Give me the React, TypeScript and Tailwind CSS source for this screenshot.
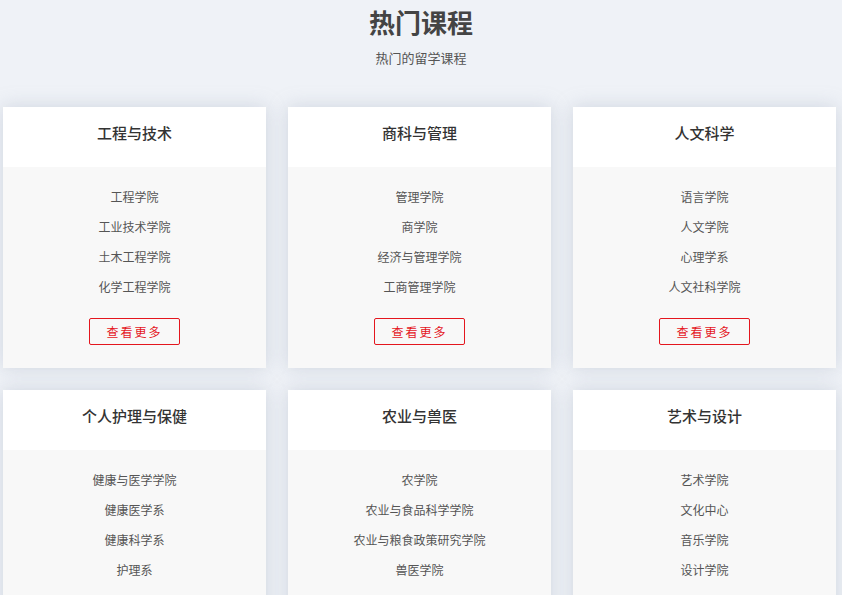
const categories = [
  { name: "工程与技术", items: ["工程学院", "工业技术学院", "土木工程学院", "化学工程学院"] },
  { name: "商科与管理", items: ["管理学院", "商学院", "经济与管理学院", "工商管理学院"] },
  { name: "人文科学", items: ["语言学院", "人文学院", "心理学系", "人文社科学院"] },
  { name: "个人护理与保健", items: ["健康与医学学院", "健康医学系", "健康科学系", "护理系"] },
  { name: "农业与兽医", items: ["农学院", "农业与食品科学学院", "农业与粮食政策研究学院", "兽医学院"] },
  { name: "艺术与设计", items: ["艺术学院", "文化中心", "音乐学院", "设计学院"] },
];

function CourseCard({ name, items }: { name: string; items: string[] }) {
  return (
    <div className="shadow-[0_0_18px_rgba(150,160,180,0.35)]">
      <div className="h-[60px] bg-white pt-[16px] text-center text-[15px] leading-[20px] font-medium text-[#333]">
        {name}
      </div>
      <div className="bg-[#f8f8f8] pt-[15px] pb-[23px] flex flex-col items-center">
        <ul className="text-[12px] text-[#555] text-center">
          {items.map((it) => (
            <li key={it} className="h-[30px] leading-[30px]">
              {it}
            </li>
          ))}
        </ul>
        <button className="mt-[16px] w-[91px] h-[27px] border border-[#e4161e] rounded-[2px] text-[12px] text-[#e4161e] tracking-[2px] bg-transparent">
          查看更多
        </button>
      </div>
    </div>
  );
}

export default function App() {
  return (
    <div
      className="w-[842px] h-[595px] overflow-hidden bg-[#eff2f7]"
      style={{ fontFamily: '"Noto Sans CJK SC", "Noto Sans", sans-serif' }}
    >
      <div className="text-center pt-[3px]">
        <h1 className="text-[26px] leading-[38px] font-bold text-[#444]">热门课程</h1>
        <p className="mt-[8px] text-[13px] leading-[18px] text-[#555]">热门的留学课程</p>
      </div>
      <div className="mt-[40px] pl-[3px] grid grid-cols-[263px_263px_263px] gap-x-[22px] gap-y-[22px]">
        {categories.map((c) => (
          <CourseCard key={c.name} name={c.name} items={c.items} />
        ))}
      </div>
    </div>
  );
}
